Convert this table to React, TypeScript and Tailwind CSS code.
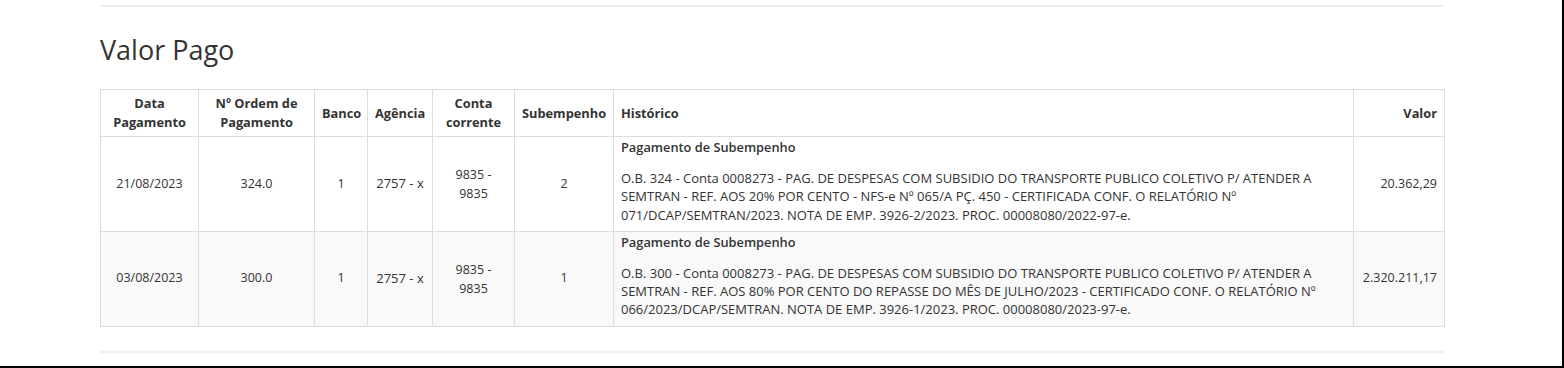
const rows = [
  {
    data: "21/08/2023",
    ordem: "324.0",
    banco: "1",
    agencia: "2757 - x",
    conta: ["9835 -", "9835"],
    sub: "2",
    linhas: [
      "O.B. 324 - Conta 0008273 - PAG. DE DESPESAS COM SUBSIDIO DO TRANSPORTE PUBLICO COLETIVO P/ ATENDER A",
      "SEMTRAN - REF. AOS 20% POR CENTO - NFS-e Nº 065/A PÇ. 450 - CERTIFICADA CONF. O RELATÓRIO Nº",
      "071/DCAP/SEMTRAN/2023. NOTA DE EMP. 3926-2/2023. PROC. 00008080/2022-97-e.",
    ],
    valor: "20.362,29",
  },
  {
    data: "03/08/2023",
    ordem: "300.0",
    banco: "1",
    agencia: "2757 - x",
    conta: ["9835 -", "9835"],
    sub: "1",
    linhas: [
      "O.B. 300 - Conta 0008273 - PAG. DE DESPESAS COM SUBSIDIO DO TRANSPORTE PUBLICO COLETIVO P/ ATENDER A",
      "SEMTRAN - REF. AOS 80% POR CENTO DO REPASSE DO MÊS DE JULHO/2023 - CERTIFICADO CONF. O RELATÓRIO Nº",
      "066/2023/DCAP/SEMTRAN. NOTA DE EMP. 3926-1/2023. PROC. 00008080/2023-97-e.",
    ],
    valor: "2.320.211,17",
  },
];

const th = "border border-[#dddddd] px-[7px] py-[4px] font-bold leading-[19px] align-middle";
const td = "border border-[#dddddd] px-[7px] align-middle text-center";

export default function App() {
  return (
    <div className="w-[1564px] h-[368px] bg-white border-r-2 border-b-2 border-black font-['Open_Sans',sans-serif] text-[#333333] text-[12.5px] overflow-hidden">
      <div className="ml-[100px] w-[1344px] pt-[5px]">
        <div className="h-[2px] bg-[#eeeeee]" />

        <h2 className="mt-[28px] text-[27px] leading-[30px] font-normal">Valor Pago</h2>

        {/* Tabela de pagamentos */}
        <table className="mt-[24px] w-[1344px] table-fixed border-collapse">
          <colgroup>
            <col className="w-[98px]" />
            <col className="w-[116px]" />
            <col className="w-[53px]" />
            <col className="w-[65px]" />
            <col className="w-[82px]" />
            <col className="w-[99px]" />
            <col className="w-[740px]" />
            <col className="w-[91px]" />
          </colgroup>
          <thead className="text-[12.8px]">
            <tr>
              <th className={`${th} text-center`}>
                Data
                <br />
                Pagamento
              </th>
              <th className={`${th} text-center`}>
                Nº Ordem de
                <br />
                Pagamento
              </th>
              <th className={`${th} text-center`}>Banco</th>
              <th className={`${th} text-center`}>Agência</th>
              <th className={`${th} text-center`}>
                Conta
                <br />
                corrente
              </th>
              <th className={`${th} text-center`}>Subempenho</th>
              <th className={`${th} text-left`}>Histórico</th>
              <th className={`${th} text-right`}>Valor</th>
            </tr>
          </thead>
          <tbody>
            {rows.map((r, i) => (
              <tr key={r.data} className={i % 2 === 1 ? "bg-[#f9f9f9]" : "bg-white"}>
                <td className={td}>{r.data}</td>
                <td className={td}>{r.ordem}</td>
                <td className={td}>{r.banco}</td>
                <td className={`${td} text-[13px]`}>{r.agencia}</td>
                <td className={`${td} leading-[19px]`}>
                  {r.conta[0]}
                  <br />
                  {r.conta[1]}
                </td>
                <td className={td}>{r.sub}</td>
                <td className="border border-[#dddddd] px-[7px] pt-[1px] pb-[7px] text-left align-top text-[13px]">
                  <div className="font-semibold leading-[18px] text-[12.8px]">Pagamento de Subempenho</div>
                  <p className="mt-[13px] leading-[18.3px]">
                    {r.linhas.map((l) => (
                      <span key={l} className="block whitespace-nowrap">
                        {l}
                      </span>
                    ))}
                  </p>
                </td>
                <td className={`${td} !text-right`}>{r.valor}</td>
              </tr>
            ))}
          </tbody>
        </table>

        <div className="mt-[24px] h-[2px] bg-[#eeeeee]" />
      </div>
    </div>
  );
}
